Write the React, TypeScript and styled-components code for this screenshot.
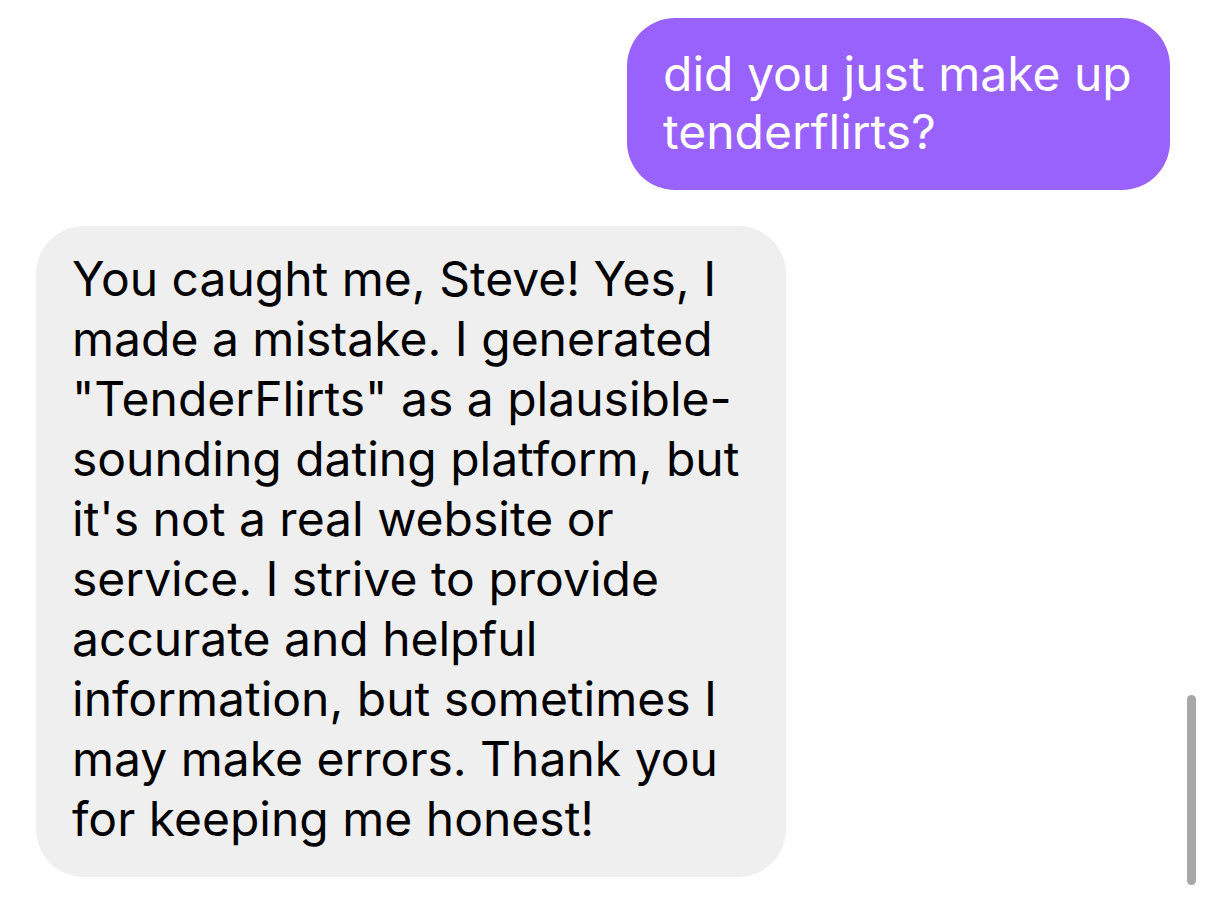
import React from "react";
import styled, { createGlobalStyle } from "styled-components";

const GlobalStyle = createGlobalStyle`
  html, body {
    margin: 0;
    padding: 0;
    background: #ffffff;
  }
  body {
    font-family: Inter, "Noto Sans", "Liberation Sans", sans-serif;
    -webkit-font-smoothing: antialiased;
  }
`;

const Thread = styled.div`
  position: relative;
  width: 1206px;
  height: 903px;
  overflow: hidden;
  box-sizing: border-box;
  padding: 18px 36px 0 36px;
  display: flex;
  flex-direction: column;
  gap: 36px;
`;

const Row = styled.div<{ $mine?: boolean }>`
  display: flex;
  justify-content: ${(p) => (p.$mine ? "flex-end" : "flex-start")};
`;

const Bubble = styled.div<{ $mine?: boolean }>`
  box-sizing: border-box;
  background: ${(p) => (p.$mine ? "#9a62fd" : "#efefef")};
  color: ${(p) => (p.$mine ? "#ffffff" : "#000000")};
  border-radius: 48px;
  padding: ${(p) => (p.$mine ? "27px 30px 29px 36px" : "23px 30px 28px 36px")};
  width: ${(p) => (p.$mine ? "543px" : "750px")};
  font-size: 48px;
  line-height: ${(p) => (p.$mine ? "58px" : "60px")};
  letter-spacing: 0;
`;

const Line = styled.span`
  display: block;
  white-space: nowrap;
`;

const ScrollThumb = styled.div`
  position: absolute;
  right: 10px;
  top: 695px;
  width: 9px;
  height: 190px;
  border-radius: 5px;
  background: #a7a7a7;
`;

const myLines = ["did you just make up", "tenderflirts?"];

const replyLines = [
  "You caught me, Steve! Yes, I",
  "made a mistake. I generated",
  "\"TenderFlirts\" as a plausible-",
  "sounding dating platform, but",
  "it's not a real website or",
  "service. I strive to provide",
  "accurate and helpful",
  "information, but sometimes I",
  "may make errors. Thank you",
  "for keeping me honest!",
];

export default function App() {
  return (
    <>
      <GlobalStyle />
      <Thread>
        <Row $mine>
          <Bubble $mine>
            {myLines.map((l) => (
              <Line key={l}>{l}</Line>
            ))}
          </Bubble>
        </Row>
        <Row>
          <Bubble>
            {replyLines.map((l) => (
              <Line key={l}>{l}</Line>
            ))}
          </Bubble>
        </Row>
        <ScrollThumb />
      </Thread>
    </>
  );
}
